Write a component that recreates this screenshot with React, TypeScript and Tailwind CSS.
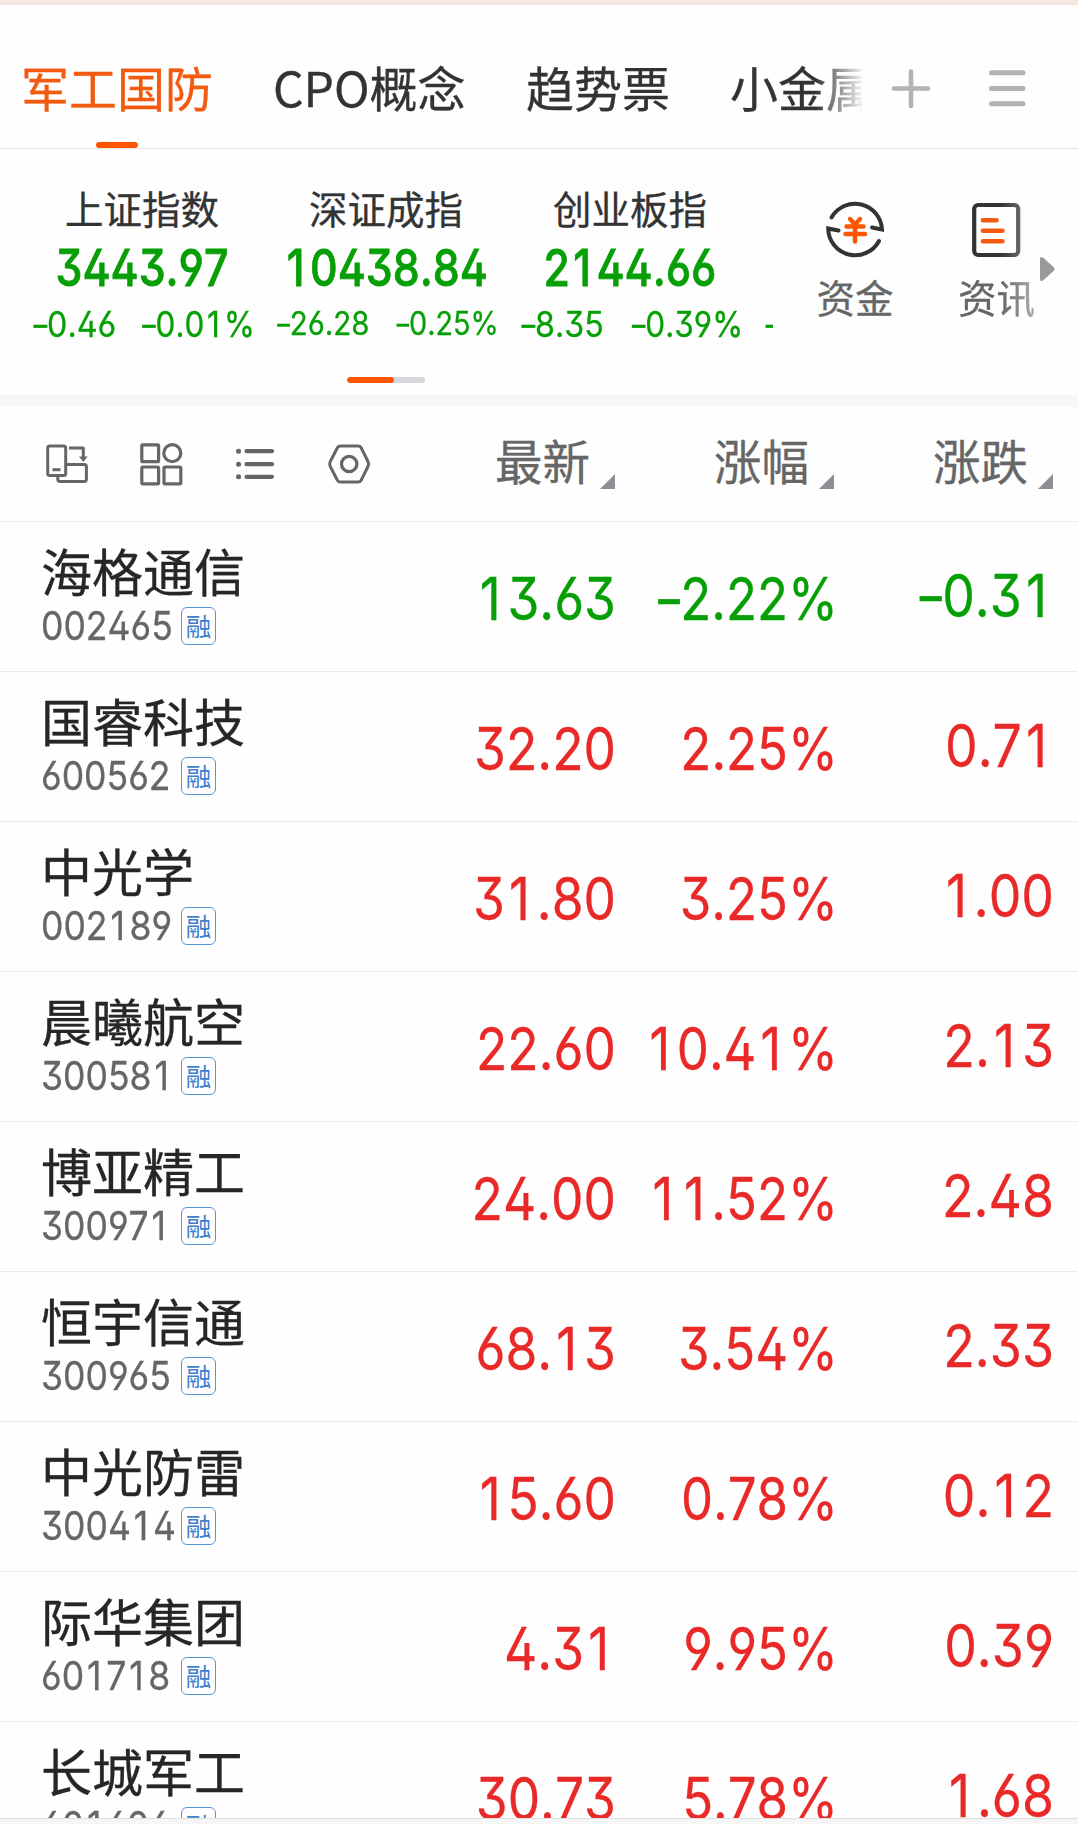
import clsx from "clsx";

const tabs = ["军工国防", "CPO概念", "趋势票", "小金属"];

const indices = [
  { name: "上证指数", value: "3443.97", change: "–0.46", pct: "–0.01%", small: false },
  { name: "深证成指", value: "10438.84", change: "–26.28", pct: "–0.25%", small: true },
  { name: "创业板指", value: "2144.66", change: "–8.35", pct: "–0.39%", small: false },
];

const columns = ["最新", "涨幅", "涨跌"];

const stocks = [
  { name: "海格通信", code: "002465", price: "13.63", pct: "–2.22%", change: "–0.31", down: true },
  { name: "国睿科技", code: "600562", price: "32.20", pct: "2.25%", change: "0.71" },
  { name: "中光学", code: "002189", price: "31.80", pct: "3.25%", change: "1.00" },
  { name: "晨曦航空", code: "300581", price: "22.60", pct: "10.41%", change: "2.13" },
  { name: "博亚精工", code: "300971", price: "24.00", pct: "11.52%", change: "2.48" },
  { name: "恒宇信通", code: "300965", price: "68.13", pct: "3.54%", change: "2.33" },
  { name: "中光防雷", code: "300414", price: "15.60", pct: "0.78%", change: "0.12" },
  { name: "际华集团", code: "601718", price: "4.31", pct: "9.95%", change: "0.39" },
  { name: "长城军工", code: "601606", price: "30.73", pct: "5.78%", change: "1.68" },
];

// Narrow figures: the 1 takes a full digit's width, the minus is short
function Num({ children, className }: { children: string; className?: string }) {
  return (
    <span
      className={clsx(
        "block whitespace-nowrap font-['Inter',sans-serif] [font-feature-settings:'ss01','kern'_0]",
        className
      )}
    >
      {children.split(/([1–])/).map((part, i) => {
        if (part === "–") {
          return (
            <span key={i} className="inline-block origin-right scale-x-[0.85]">
              –
            </span>
          );
        }
        if (part === "1") {
          return (
            <span key={i} className="inline-block w-[0.62em] pr-[0.05em] text-center">
              1
            </span>
          );
        }
        return part;
      })}
    </span>
  );
}

function TabBar() {
  return (
    <nav className="flex h-[144px] border-b border-[#e4e4e4]">
      <div className="flex w-[862px] overflow-hidden pl-[21px] [mask-image:linear-gradient(to_right,#000_815px,transparent_865px)]">
        {tabs.map((tab, i) => (
          <div
            key={tab}
            className={clsx(
              "flex shrink-0 flex-col items-start whitespace-nowrap pt-[51px] text-[48px] leading-[60px]",
              i === 0 ? "w-[252px] text-[#f25a10]" : "text-[#333]",
              i === 1 && "w-[253px]",
              i === 2 && "w-[204px]"
            )}
          >
            {tab}
            {i === 0 && <span className="mt-[26px] ml-[75px] h-1.5 w-[42px] rounded-full bg-[#ff5500]" />}
          </div>
        ))}
      </div>
      <svg className="mt-[62px] ml-[28px] h-[44px] w-[44px] shrink-0" viewBox="0 0 44 44" stroke="#b3b3b3" strokeWidth="4.6" strokeLinecap="round">
        <path d="M4 21.5H38M21 4.5V39" />
      </svg>
      <svg className="mt-[62px] ml-[52px] h-[44px] w-[44px] shrink-0" viewBox="0 0 44 44" stroke="#b3b3b3" strokeWidth="5" strokeLinecap="round">
        <path d="M5.5 5.7H37M5.5 21.4H37M5.5 36.8H37" />
      </svg>
    </nav>
  );
}

function FundIcon() {
  return (
    <svg className="h-[60px] w-[60px]" viewBox="0 0 60 60" fill="none" strokeLinecap="round">
      <path d="M6.5 17.5A27 27 0 0 1 57 29.5L47 27.5" stroke="#333" strokeWidth="4" />
      <path d="M54 41A27 27 0 0 1 3.2 28.5L13.5 30.5" stroke="#333" strokeWidth="4" />
      <path d="M25 19L30 24.5L35 19M21.5 26.5H38.5M20.5 34H40M30 25.5V41.5" stroke="#ff5500" strokeWidth="4.4" />
    </svg>
  );
}

function NewsIcon() {
  return (
    <svg className="h-[60px] w-[60px]" viewBox="0 0 60 60" fill="none" strokeLinecap="round">
      <rect x="7.2" y="5" width="44" height="50" rx="4" stroke="#333" strokeWidth="4.2" />
      <path d="M16 20.3H29.5M16 30.8H35.5M16 41.3H35.5" stroke="#f25a10" strokeWidth="4.6" />
    </svg>
  );
}

function IndexPanel() {
  return (
    <section className="h-[246px]">
      <div className="flex h-[228px]">
        <div className="flex w-[773px] shrink-0 overflow-hidden pl-[20px]">
          {indices.map((item) => (
            <div key={item.name} className="flex w-[244px] shrink-0 flex-col pt-[38px] text-[#069f06]">
              <div className="text-center text-[38.5px] leading-[40px] text-[#333]">{item.name}</div>
              <div className="mt-[15px] flex justify-center">
                <Num className="scale-x-[0.84] text-[51px] leading-[52px] font-medium [-webkit-text-stroke:0.8px]">
                  {item.value}
                </Num>
              </div>
              <div className="mt-[12px] flex justify-between pr-[9px] pl-[11px]">
                <Num className={clsx("origin-left scale-x-[0.92] leading-[36px]", item.small ? "text-[32px]" : "text-[35px]")}>
                  {item.change}
                </Num>
                <Num className={clsx("origin-right scale-x-[0.9] leading-[36px]", item.small ? "text-[32px]" : "text-[35px]")}>
                  {item.pct}
                </Num>
              </div>
            </div>
          ))}
          <div className="shrink-0 pt-[157px] pl-[11px] text-[#069f06]">
            <Num className="text-[35px] leading-[36px]">–</Num>
          </div>
        </div>
        <div className="ml-[11px] flex w-[142px] flex-col items-center pt-[51px] text-[38.5px] leading-[44px] text-[#666]">
          <FundIcon />
          <span className="mt-[14px]">资金</span>
        </div>
        <div className="flex w-[110px] flex-col items-center pt-[51px] text-[38.5px] leading-[44px] text-[#666] [mask-image:linear-gradient(to_right,#000_75px,#0008_110px)]">
          <div className="flex w-[142px] flex-col items-center pl-[31px]">
            <NewsIcon />
            <span className="mt-[14px] whitespace-nowrap">资讯</span>
          </div>
        </div>
        <svg className="mt-[107px] ml-[4px] h-[26px] w-[16px]" viewBox="0 0 16 26">
          <path d="M0 3Q0 0 3 1.5L13.5 11Q15.5 13 13.5 15L3 24.5Q0 26 0 23Z" fill="#999" />
        </svg>
      </div>
      <div className="ml-[347px] flex h-1.5 w-[78px] overflow-hidden rounded-full bg-[#d5d7dd]">
        <div className="h-full w-[47px] rounded-full bg-[#ff5500]" />
      </div>
    </section>
  );
}

function Toolbar() {
  return (
    <div className="flex h-[115px] border-b border-[#ebebeb] pl-[44px] text-[#666]">
      <div className="flex gap-[46px] pt-[33px]">
        <svg className="h-12 w-12" viewBox="0 0 48 48" fill="none" stroke="currentColor" strokeWidth="3" strokeLinejoin="round">
          <rect x="3.7" y="6" width="18" height="29.5" rx="2" />
          <path d="M8.5 29.7H16.5" />
          <path d="M22 24.5H40.2Q42.4 24.5 42.4 26.7V39.2Q42.4 41.4 40.2 41.4H16Q13.8 41.4 13.8 39.2V36" />
          <path d="M25 8H39.3V18" />
          <path d="M35 16.5H43.6L39.3 22Z" fill="currentColor" stroke="none" />
        </svg>
        <svg className="h-12 w-12" viewBox="0 0 48 48" fill="none" stroke="currentColor" strokeWidth="3.2">
          <rect x="3.8" y="4.9" width="16.8" height="16.8" rx="1" />
          <circle cx="34.3" cy="13.2" r="8.5" />
          <rect x="3.8" y="27" width="16.8" height="16.8" rx="1" />
          <rect x="26" y="27" width="16.8" height="16.8" rx="1" />
        </svg>
        <svg className="h-12 w-12" viewBox="0 0 48 48" fill="none" stroke="currentColor" strokeWidth="4.2" strokeLinecap="round">
          <path d="M14.5 11.2H40M14.5 24.2H40M14.5 36.8H40" />
          <path d="M6.5 11.2H6.6M6.5 24.2H6.6M6.5 36.8H6.6" strokeWidth="5" />
        </svg>
        <svg className="h-12 w-12" viewBox="0 0 48 48" fill="none" stroke="currentColor" strokeWidth="3" strokeLinejoin="round">
          <path d="M14.5 5.9H32Q34 5.9 35 7.5L42 21.5Q43.3 24 42 26.5L35 40.5Q34 42.1 32 42.1H14.5Q12.5 42.1 11.5 40.5L4.3 26.5Q3 24 4.3 21.5L11.5 7.5Q12.5 5.9 14.5 5.9Z" />
          <circle cx="23.2" cy="24" r="7.7" strokeWidth="3.2" />
        </svg>
      </div>
      <div className="ml-[22px] flex grow">
        {columns.map((col) => (
          <div key={col} className="flex w-[219px] shrink-0 justify-end">
            <span className="mt-[23px] text-[47.5px] leading-[60px]">{col}</span>
            <svg className="mt-[67px] ml-[10px] h-[15px] w-[15px]" viewBox="0 0 15 15">
              <path d="M15 0V15H0Z" fill="#8e8e95" />
            </svg>
          </div>
        ))}
      </div>
    </div>
  );
}

function StockRow({ stock }: { stock: (typeof stocks)[number] }) {
  return (
    <li className="flex h-[150px] shrink-0 border-b border-[#ebebeb] pl-[41px]">
      <div className="w-[301px] pt-[19px]">
        <div className="text-[51px] leading-[58px] text-[#262626]">{stock.name}</div>
        <div className="mt-[8px] flex items-center text-[#666]">
          <div className="w-[140px]">
            <Num className="origin-left scale-x-[0.9] text-[39.5px] leading-[38px]">{stock.code}</Num>
          </div>
          <span className="flex h-[38px] w-[35px] items-center justify-center rounded-md border border-[#5a93d6] pb-[3px] text-[25.5px] leading-none text-[#3f7fcb] [-webkit-text-stroke:0]">
            融
          </span>
        </div>
      </div>
      <div className={clsx("flex grow text-[58.5px] leading-[60px]", stock.down ? "text-[#069f06]" : "text-[#e92828]")}>
        <Num className="w-[274px] origin-right scale-x-[0.88] pt-[47px] text-right">{stock.price}</Num>
        <Num className="w-[222px] origin-right scale-x-[0.87] pt-[47px] text-right">{stock.pct}</Num>
        <Num className="w-[216px] origin-right scale-x-[0.885] pt-[44px] text-right">{stock.change}</Num>
      </div>
    </li>
  );
}

export default function App() {
  return (
    <div className="flex h-[1824px] w-[1078px] flex-col overflow-hidden bg-[#fefefe] font-['Noto_Sans_CJK_SC',sans-serif] [-webkit-text-stroke:0.3px]">
      <div className="h-[5px] shrink-0 bg-[#f5e6df]" />
      <TabBar />
      <IndexPanel />
      <div className="h-[12px] shrink-0 bg-[#f6f7f9]" />
      <Toolbar />
      <ul className="flex h-[1296px] shrink-0 flex-col overflow-hidden">
        {stocks.map((stock) => (
          <StockRow key={stock.code} stock={stock} />
        ))}
      </ul>
      <div className="h-[6px] shrink-0 border-t border-[#e0e0e0] bg-[#f6f6f7]" />
    </div>
  );
}
